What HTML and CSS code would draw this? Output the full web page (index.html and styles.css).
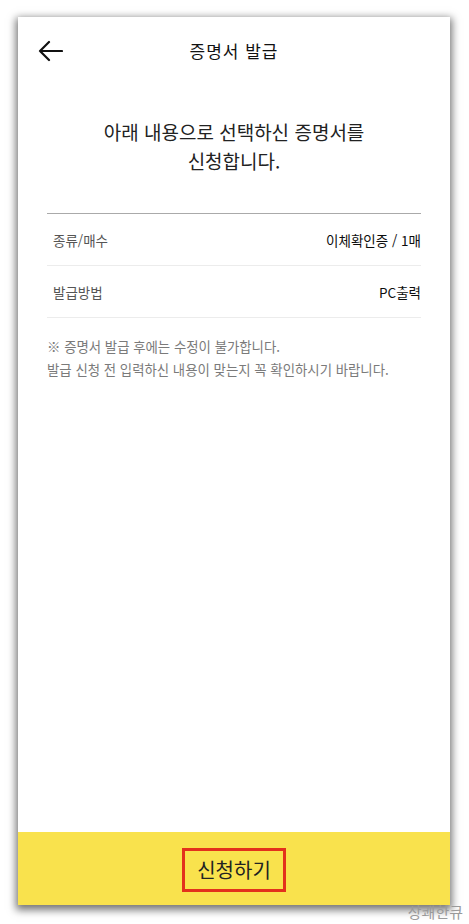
FILE: index.html
```html
<!DOCTYPE html>
<html lang="ko">
<head>
  <meta charset="UTF-8" />
  <meta name="viewport" content="width=device-width, initial-scale=1.0"/>
  <title>증명서 발급</title>
  <link rel="stylesheet" href="styles.css">
</head>
<body>
<div class="page">
  <div class="phone">
    <div class="topbar">
      <a class="back" href="#">
        <svg width="26" height="22" viewBox="0 0 26 22">
          <path d="M25 11H3M12 2L3 11l9 9" fill="none" stroke="#111" stroke-width="2.2" stroke-linecap="round" stroke-linejoin="round"/>
        </svg>
      </a>
      <div class="title">증명서 발급</div>
    </div>

    <div class="content">
      <h1>아래 내용으로 선택하신 증명서를<br>신청합니다.</h1>

      <div class="summary">
        <div class="row">
          <span class="label">종류/매수</span>
          <span class="value">이체확인증 / 1매</span>
        </div>
        <div class="row">
          <span class="label">발급방법</span>
          <span class="value">PC출력</span>
        </div>
      </div>

      <p class="note">※ 증명서 발급 후에는 수정이 불가합니다.<br>발급 신청 전 입력하신 내용이 맞는지 꼭 확인하시기 바랍니다.</p>
    </div>

    <div class="submit-bar">
      <button class="submit">신청하기</button>
    </div>
  </div>
  <div class="watermark">상쾌한큐</div>
</div>
</body>
</html>
```

FILE: styles.css
```css
body {
  margin: 0;
  font-family: "Noto Sans CJK KR", "Noto Sans", sans-serif;
  background: #fff;
  color: #222;
}
.page {
  width: 469px;
  height: 924px;
  padding: 17px 0 0 18px;
  box-sizing: border-box;
  position: relative;
  overflow: hidden;
}
.phone {
  width: 432px;
  height: 888px;
  background: #fff;
  display: flex;
  flex-direction: column;
  box-shadow: 0 3px 8px 2px rgba(0, 0, 0, 0.55);
}
.topbar {
  height: 66px;
  display: flex;
  align-items: center;
  justify-content: center;
  position: relative;
}
.back {
  position: absolute;
  left: 19px;
  top: 23px;
  display: flex;
}
.title {
  font-size: 17px;
  letter-spacing: 1px;
  color: #111;
}
.content {
  flex-grow: 1;
  padding: 0 29px;
}
h1 {
  margin: 34px 0 38px;
  font-size: 19px;
  font-weight: 400;
  line-height: 29px;
  text-align: center;
  color: #222;
}
.summary {
  border-top: 1px solid #aaa;
}
.row {
  height: 51px;
  display: flex;
  justify-content: space-between;
  align-items: center;
  border-bottom: 1px solid #ececec;
  font-size: 13.5px;
  padding: 0 0 0 6px;
}
.label {
  color: #555;
}
.value {
  color: #0d0d0d;
}
.note {
  margin: 17px 0 0;
  font-size: 13.4px;
  line-height: 23px;
  color: #7a7a7a;
}
.submit-bar {
  height: 73px;
  background: #f9e24d;
  display: flex;
  align-items: center;
  justify-content: center;
}
.submit {
  font-family: inherit;
  font-size: 20px;
  color: #222;
  background: none;
  border: 3px solid #e3311c;
  padding: 0 12px;
  height: 44px;
  margin-top: 2px;
  cursor: pointer;
}
.watermark {
  position: absolute;
  right: 6px;
  bottom: 3px;
  font-size: 15px;
  line-height: 18px;
  color: #9a9a9a;
}
```
